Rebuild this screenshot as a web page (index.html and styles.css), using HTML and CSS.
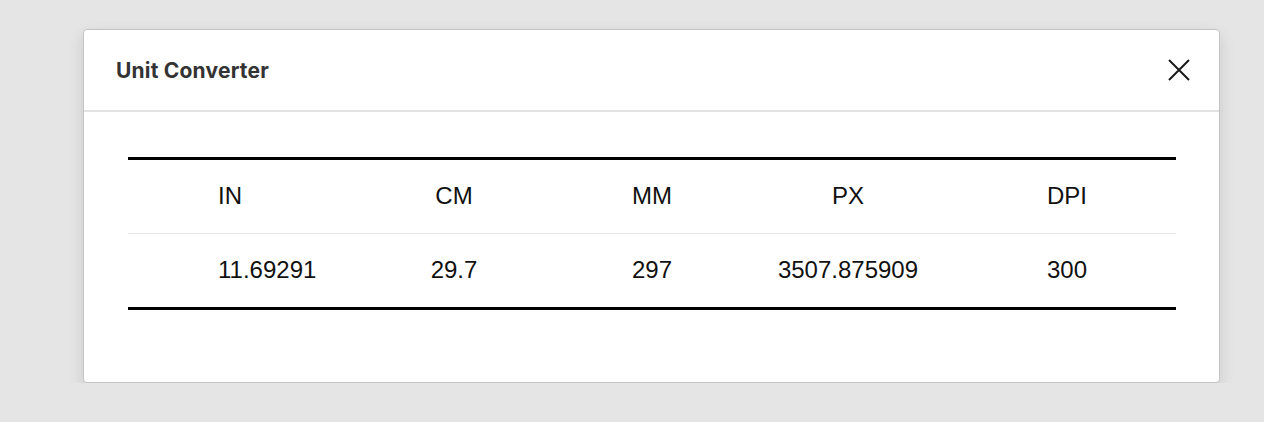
FILE: index.html
```html
<!DOCTYPE html>
<html lang="en">
<head>
    <meta charset="UTF-8">
    <meta name="viewport" content="width=device-width, initial-scale=1.0">
    <title>Unit Converter</title>
    <link rel="stylesheet" href="styles.css">
</head>
<body>
    <div class="modal">
        <div class="modal-header">
            <h2 class="modal-title">Unit Converter</h2>
            <button class="btn-close" type="button" aria-label="Close">
                <svg width="22" height="22" viewBox="0 0 22 22">
                    <path d="M1 1 L21 21 M21 1 L1 21" stroke="#1a1a1a" stroke-width="2" fill="none"/>
                </svg>
            </button>
        </div>
        <div class="modal-body">
            <table class="units">
                <colgroup>
                    <col class="c-in">
                    <col class="c-cm">
                    <col class="c-mm">
                    <col class="c-px">
                    <col class="c-dpi">
                </colgroup>
                <thead>
                    <tr>
                        <th class="first">IN</th>
                        <th>CM</th>
                        <th>MM</th>
                        <th>PX</th>
                        <th>DPI</th>
                    </tr>
                </thead>
                <tbody>
                    <tr>
                        <td class="first">11.69291</td>
                        <td>29.7</td>
                        <td>297</td>
                        <td>3507.875909</td>
                        <td>300</td>
                    </tr>
                </tbody>
            </table>
        </div>
    </div>
</body>
</html>
```

FILE: styles.css
```css
* {
    margin: 0;
    padding: 0;
    box-sizing: border-box;
}
body {
    background: #e5e5e5;
    font-family: "Liberation Sans", Arial, sans-serif;
}
.modal {
    width: 1137px;
    margin: 29px 0 0 83px;
    background: #fff;
    border: 1px solid #c4c4c4;
    border-radius: 4px;
    box-shadow: 0 6px 16px rgba(0, 0, 0, 0.12);
}
.modal-header {
    height: 82px;
    display: flex;
    align-items: center;
    justify-content: space-between;
    padding: 0 29px 0 32px;
    border-bottom: 2px solid #e2e2e2;
}
.modal-title {
    font-family: Inter, "Noto Sans", sans-serif;
    font-size: 21px;
    font-weight: 700;
    color: #333;
    letter-spacing: 0.2px;
}
.btn-close {
    border: 0;
    background: none;
    width: 22px;
    height: 22px;
    display: flex;
    cursor: pointer;
}
.modal-body {
    padding: 45px 44px 72px 44px;
}
.units {
    width: 100%;
    border-collapse: collapse;
    table-layout: fixed;
    border-top: 3px solid #000;
    border-bottom: 3px solid #000;
    font-size: 24px;
    color: #111;
}
.c-in { width: 214px; }
.c-cm { width: 224px; }
.c-mm { width: 172px; }
.c-px { width: 220px; }
.c-dpi { width: 218px; }
.units th,
.units td {
    font-weight: normal;
    text-align: center;
    line-height: 28px;
    white-space: nowrap;
}
.units th {
    padding: 22px 0 23px;
    border-bottom: 1px solid #e8e8e8;
}
.units td {
    padding: 22px 0 23px;
}
.units .first {
    text-align: left;
    padding-left: 90px;
}
```
